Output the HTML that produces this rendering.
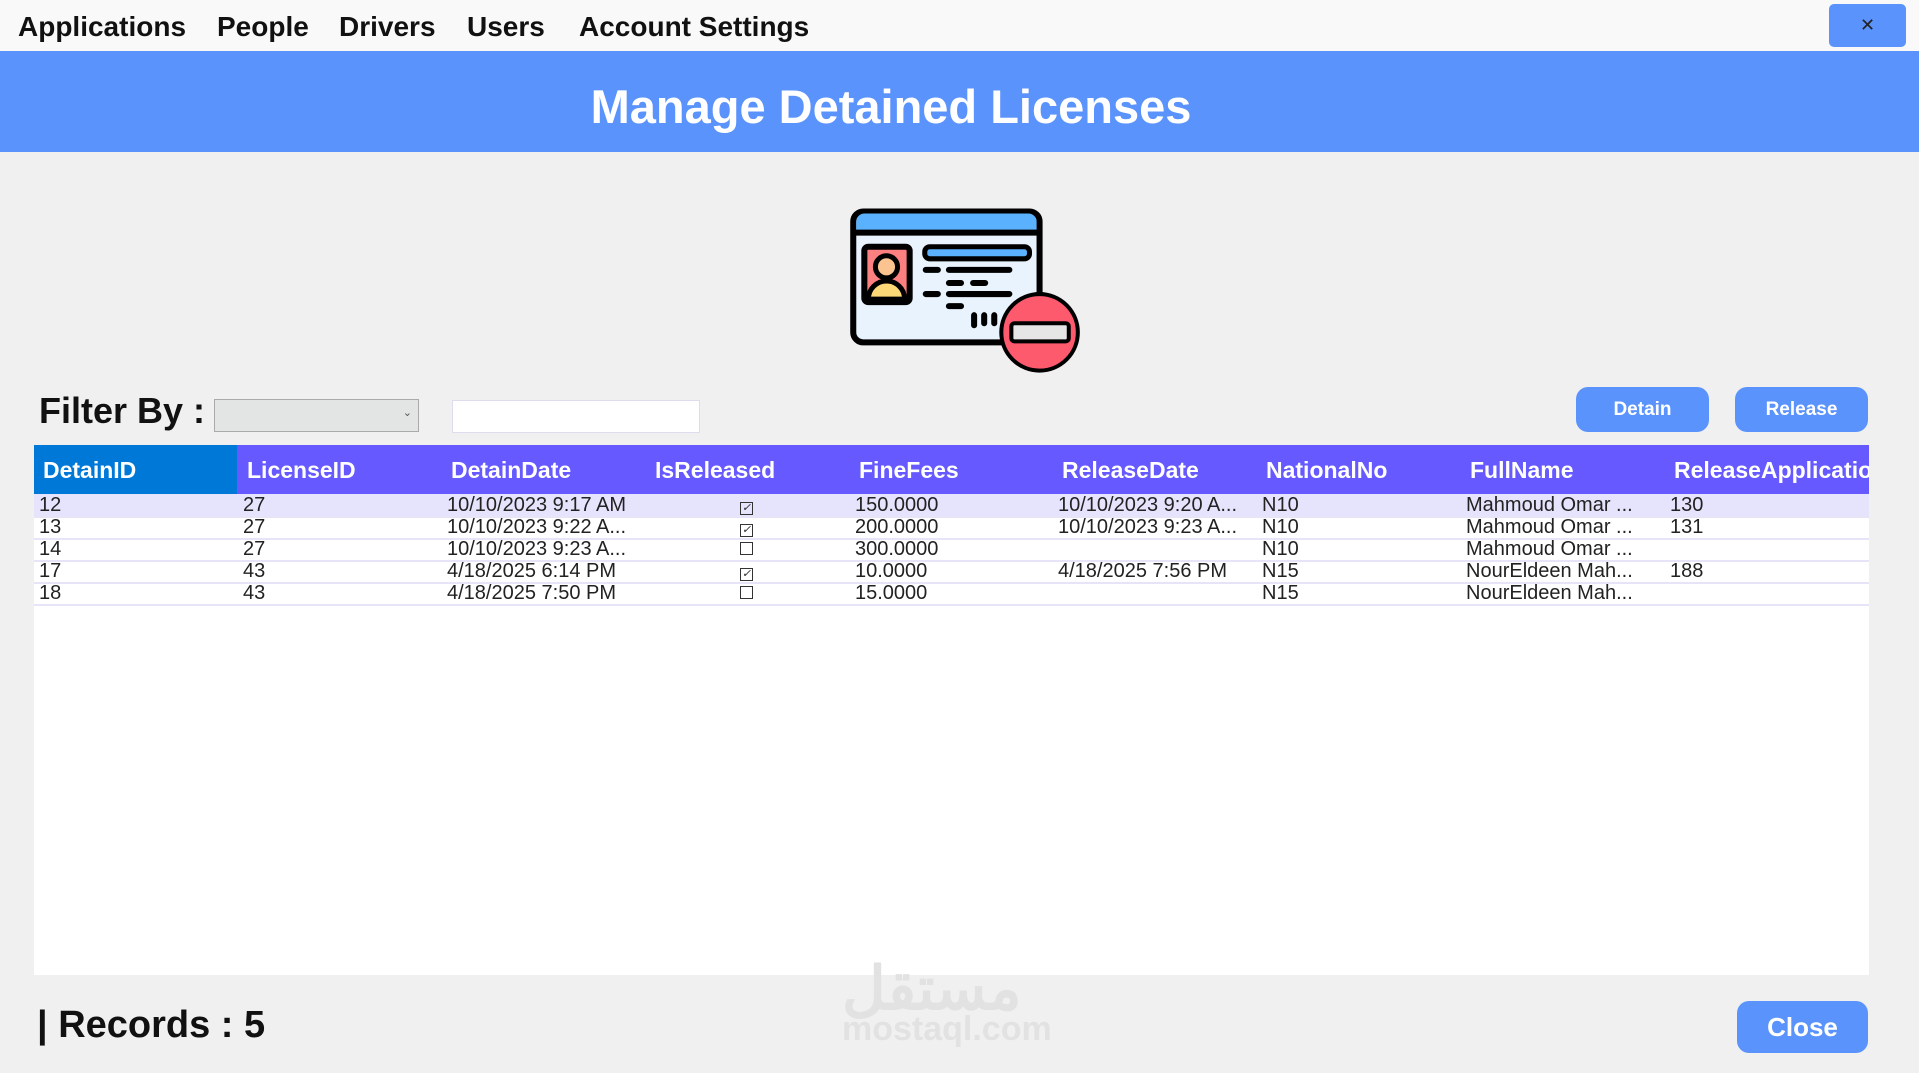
<!DOCTYPE html>
<html><head><meta charset="utf-8"><style>
body{margin:0;width:1919px;height:1073px;background:#f0f0f0;font-family:"Liberation Sans",sans-serif;position:relative;overflow:hidden}
.menu{position:absolute;top:0;left:0;width:1919px;height:51px;background:#f9f9f9}
.menu span{position:absolute;top:11px;font-size:28px;font-weight:bold;color:#111}
.x{position:absolute;left:1829px;top:4px;width:77px;height:43px;background:#5b93fd;border-radius:5px;color:#222;text-align:center;line-height:43px;font-size:18px}
.hdr{position:absolute;top:51px;left:0;width:1919px;height:101px;background:#5b93fd;color:#fff;font-weight:bold;font-size:47px;text-align:center;line-height:112px}
.hdr div{position:absolute;left:0;width:1782px;}
.abs{position:absolute}
.btn{position:absolute;background:#5b93fd;color:#fff;font-weight:bold;border-radius:12px;text-align:center}
.grid{position:absolute;left:34px;top:445px;width:1835px;height:530px;background:#fff;overflow:hidden}
.gh{position:absolute;top:0;left:0;width:1835px;height:49px;background:#6559ff}
.gh span{position:absolute;top:12px;color:#fff;font-weight:bold;font-size:23px;white-space:nowrap}
.row{position:absolute;left:0;width:1835px;height:22px;border-bottom:2px solid #e6e4f6}
.row span{position:absolute;top:0;font-size:20px;color:#222;line-height:22px;white-space:nowrap}
.cb{display:inline-block;width:11px;height:11px;border:1px solid #333;font-size:11px;line-height:11px;text-align:center}
</style></head><body>
<div class="menu">
<span style="left:18px">Applications</span><span style="left:217px">People</span><span style="left:339px">Drivers</span><span style="left:467px">Users</span><span style="left:579px">Account Settings</span>
</div>
<div class="x">✕</div>
<div class="hdr"><div>Manage Detained Licenses</div></div>
<svg class="abs" style="left:818px;top:186px" width="282" height="202" viewBox="0 0 280 200">
<rect x="35" y="25" width="185" height="130" rx="10" fill="#e8f3fd" stroke="#000" stroke-width="6"/>
<path d="M38 45V35a8 8 0 0 1 8-8h163a8 8 0 0 1 8 8v10z" fill="#5ab1fd"/>
<line x1="35" y1="46" x2="220" y2="46" stroke="#000" stroke-width="6"/>
<rect x="46" y="60" width="45" height="55" rx="4" fill="#fd8080" stroke="#000" stroke-width="6"/>
<circle cx="68" cy="80" r="11" fill="#fbc38f" stroke="#000" stroke-width="5"/>
<path d="M50 112a18 18 0 0 1 36 0z" fill="#fcd877" stroke="#000" stroke-width="5"/>
<rect x="106" y="60" width="104" height="12" rx="5" fill="#5ab1fd" stroke="#000" stroke-width="5"/>
<g stroke="#000" stroke-width="6" stroke-linecap="round"><path d="M107 83h12M130 83h60M130 96h12M154 96h12M107 107h12M130 107h60M130 119h12M155 128v10M165 128v8M175 128v8"/></g>
<circle cx="220" cy="145" r="38" fill="#fd5a6e" stroke="#000" stroke-width="4"/>
<rect x="192" y="136" width="57" height="18" rx="3" fill="#e6e6e6" stroke="#000" stroke-width="4"/>
</svg>
<div class="abs" style="left:39px;top:390px;font-size:36px;font-weight:bold;color:#111">Filter By :</div>
<div class="abs" style="left:214px;top:399px;width:203px;height:31px;background:#e3e4e4;border:1px solid #aaa"><span style="position:absolute;right:6px;top:6px;font-size:11px;color:#555">⌄</span></div>
<div class="abs" style="left:452px;top:400px;width:246px;height:31px;background:#fff;border:1px solid #dde"></div>
<div class="btn" style="left:1576px;top:387px;width:133px;height:45px;line-height:45px;font-size:19px">Detain</div>
<div class="btn" style="left:1735px;top:387px;width:133px;height:45px;line-height:45px;font-size:19px">Release</div>
<div class="grid">
<div class="gh"><div style="position:absolute;left:0;top:0;width:203px;height:49px;background:#0078d7"></div>
<span style="left:9px">DetainID</span><span style="left:213px">LicenseID</span><span style="left:417px">DetainDate</span><span style="left:621px">IsReleased</span><span style="left:825px">FineFees</span><span style="left:1028px">ReleaseDate</span><span style="left:1232px">NationalNo</span><span style="left:1436px">FullName</span><span style="left:1640px">ReleaseApplicationID</span></div>
<div class="row" style="top:49px;background:#e6e4fd"><span style="left:5px">12</span><span style="left:209px">27</span><span style="left:413px">10/10/2023 9:17 AM</span><span style="left:706px"><i class="cb">✓</i></span><span style="left:821px">150.0000</span><span style="left:1024px">10/10/2023 9:20 A...</span><span style="left:1228px">N10</span><span style="left:1432px">Mahmoud Omar ...</span><span style="left:1636px">130</span></div>
<div class="row" style="top:71px"><span style="left:5px">13</span><span style="left:209px">27</span><span style="left:413px">10/10/2023 9:22 A...</span><span style="left:706px"><i class="cb">✓</i></span><span style="left:821px">200.0000</span><span style="left:1024px">10/10/2023 9:23 A...</span><span style="left:1228px">N10</span><span style="left:1432px">Mahmoud Omar ...</span><span style="left:1636px">131</span></div>
<div class="row" style="top:93px"><span style="left:5px">14</span><span style="left:209px">27</span><span style="left:413px">10/10/2023 9:23 A...</span><span style="left:706px"><i class="cb"></i></span><span style="left:821px">300.0000</span><span style="left:1228px">N10</span><span style="left:1432px">Mahmoud Omar ...</span></div>
<div class="row" style="top:115px"><span style="left:5px">17</span><span style="left:209px">43</span><span style="left:413px">4/18/2025 6:14 PM</span><span style="left:706px"><i class="cb">✓</i></span><span style="left:821px">10.0000</span><span style="left:1024px">4/18/2025 7:56 PM</span><span style="left:1228px">N15</span><span style="left:1432px">NourEldeen Mah...</span><span style="left:1636px">188</span></div>
<div class="row" style="top:137px"><span style="left:5px">18</span><span style="left:209px">43</span><span style="left:413px">4/18/2025 7:50 PM</span><span style="left:706px"><i class="cb"></i></span><span style="left:821px">15.0000</span><span style="left:1228px">N15</span><span style="left:1432px">NourEldeen Mah...</span></div>
</div>
<div class="abs" style="left:842px;top:940px;font-size:60px;font-weight:bold;color:#e2e2e2;font-family:'Noto Sans CJK SC',sans-serif">مستقل</div>
<div class="abs" style="left:842px;top:1010px;font-size:34px;font-weight:bold;color:#e2e2e2">mostaql.com</div>
<div class="abs" style="left:37px;top:1004px;font-size:38px;font-weight:bold;color:#111">| Records :  5</div>
<div class="btn" style="left:1737px;top:1001px;width:131px;height:52px;line-height:52px;font-size:26px">Close</div>
</body></html>
